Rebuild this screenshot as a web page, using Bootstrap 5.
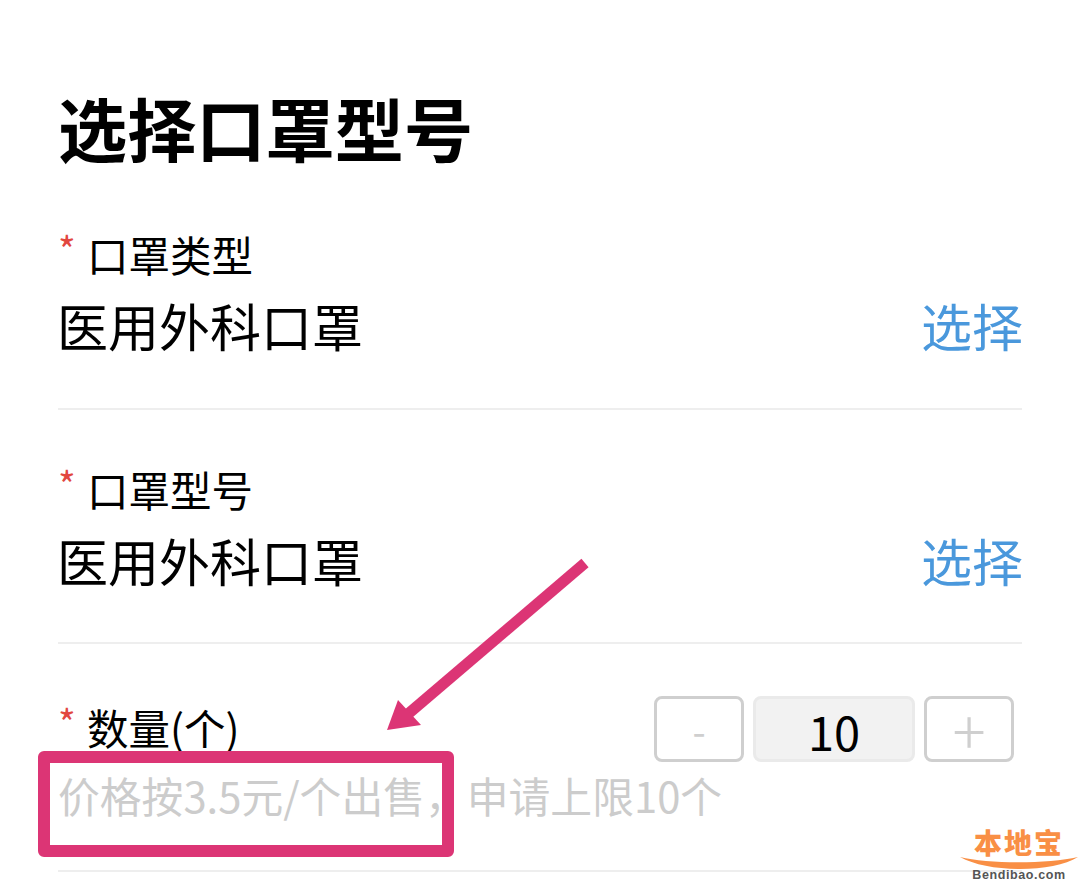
<!DOCTYPE html>
<html lang="zh">
<head>
<meta charset="utf-8">
<title>选择口罩型号</title>
<link href="https://cdn.jsdelivr.net/npm/bootstrap@5.3.0/dist/css/bootstrap.min.css" rel="stylesheet">
<style>
html,body{height:884px;overflow:hidden;background:#fff}
body{font-family:"Noto Sans CJK SC","Liberation Sans",sans-serif;color:#000;position:relative}
.sheet{padding:87px 58px 0 58px}
.page-title{font-size:69.2px;line-height:80px;font-weight:700;margin:0;height:80px}
.field{border-bottom:2px solid #eeeeee}
.field-one{height:243px;padding-top:62px}
.field-two{height:234px;padding-top:54px}
.field-three{height:228px;padding-top:52px}
.req{color:#e2473f;font-size:38px;line-height:40px;width:29px;height:40px}
.lab{font-size:41.5px;line-height:50px}
.val{font-size:51px;line-height:72px;margin-left:-1px}
.pick{font-size:51px;line-height:72px;color:#4a98dc;margin-right:-1px}
.rowline{margin-top:10px}
.step{width:90px;height:66px;border:3px solid #cfcfcf;border-radius:8px;background:#fff;color:#cfcfcf;font-size:38px;line-height:62px;text-align:center}
.step-plus{font-size:62px;font-weight:300;line-height:58px}
.num{width:162px;height:66px;border:3px solid #eaeaea;border-radius:8px;background:#f2f2f2;font-size:47px;line-height:64px;text-align:center}
.steps{gap:9px;margin-right:8px}
.lab-three{margin-top:6px}
.hint{font-size:41.8px;line-height:56px;color:#cccccc;margin-top:5px}
.mark-box{position:absolute;left:38px;top:751px;width:416px;height:106px;border:12px solid #dc3575;border-radius:6px}
.arrow-over{position:absolute;left:380px;top:550px}
.logo-over{position:absolute;left:958px;top:827px;width:122px;height:56px;text-align:center}
.logo-cn{font-weight:900;font-size:28px;line-height:30px;color:#f98f45;letter-spacing:2px;height:30px}
.logo-en{font-family:"Liberation Sans",sans-serif;font-weight:700;font-size:12.5px;line-height:14px;color:#555;letter-spacing:.6px;margin-top:-1px}
</style>
</head>
<body>
<div class="sheet">
  <h1 class="page-title">选择口罩型号</h1>
  <div class="field field-one">
    <div class="d-flex lab"><span class="req">*</span><span>口罩类型</span></div>
    <div class="d-flex justify-content-between rowline"><span class="val">医用外科口罩</span><span class="pick">选择</span></div>
  </div>
  <div class="field field-two">
    <div class="d-flex lab"><span class="req">*</span><span>口罩型号</span></div>
    <div class="d-flex justify-content-between rowline"><span class="val">医用外科口罩</span><span class="pick">选择</span></div>
  </div>
  <div class="field field-three">
    <div class="d-flex justify-content-between align-items-start">
      <div class="d-flex lab lab-three"><span class="req">*</span><span>数量(个)</span></div>
      <div class="d-flex steps"><div class="step">-</div><div class="num">10</div><div class="step step-plus">+</div></div>
    </div>
    <div class="hint">价格按3.5元/个出售，申请上限10个</div>
  </div>
</div>
<div class="mark-box"></div>
<svg class="arrow-over" width="220" height="190" viewBox="0 0 220 190"><path d="M205 13 L28 164" stroke="#dc3575" stroke-width="11" fill="none"/><path d="M7 180 L18 150 L41 175 Z" fill="#dc3575"/></svg>
<div class="logo-over">
  <div class="logo-cn">本地宝</div>
  <svg class="d-block" width="122" height="12" viewBox="0 0 122 12"><path d="M2 0 C30 7 90 7 120 0 C95 16 30 16 2 0 Z" fill="#f98f45"/></svg>
  <div class="logo-en">Bendibao.com</div>
</div>
<script src="https://cdn.jsdelivr.net/npm/bootstrap@5.3.0/dist/js/bootstrap.bundle.min.js"></script>
</body>
</html>
